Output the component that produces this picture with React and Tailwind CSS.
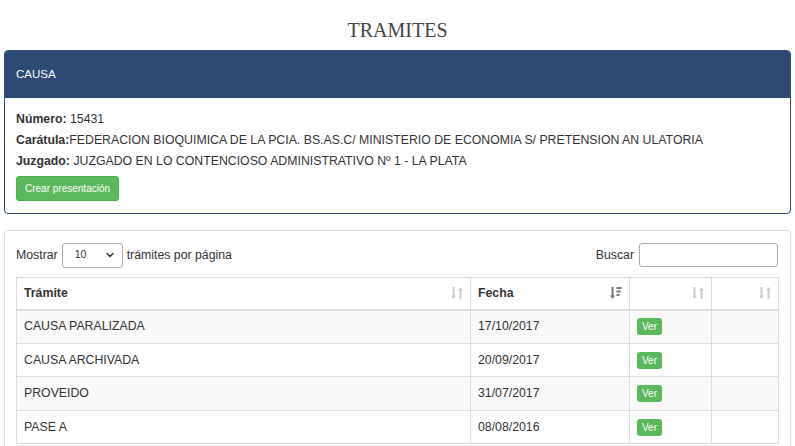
import { ChevronDown } from 'lucide-react'

const rows = [
  { tramite: 'CAUSA PARALIZADA', fecha: '17/10/2017' },
  { tramite: 'CAUSA ARCHIVADA', fecha: '20/09/2017' },
  { tramite: 'PROVEIDO', fecha: '31/07/2017' },
  { tramite: 'PASE A', fecha: '08/08/2016' },
]

// glyphicon-sort look-alike: down arrow + up arrow
function SortIcon({ className }) {
  return (
    <svg width="12" height="14" viewBox="0 0 12 14" className={className} fill="currentColor">
      <rect x="1.5" y="1" width="2" height="9" />
      <path d="M0 9.5h5l-2.5 3.5z" />
      <rect x="8.5" y="4" width="2" height="9" />
      <path d="M7 4.5h5l-2.5-3.5z" />
    </svg>
  )
}

// sorted descending: arrow + stacked bars
function SortDescIcon({ className }) {
  return (
    <svg width="12" height="14" viewBox="0 0 12 14" className={className} fill="currentColor">
      <rect x="1.5" y="1" width="2" height="9" />
      <path d="M0 9.5h5l-2.5 3.5z" />
      <rect x="6.5" y="1" width="5" height="2" />
      <rect x="6.5" y="4.5" width="4" height="2" />
      <rect x="6.5" y="8" width="3" height="2" />
    </svg>
  )
}

export default function App() {
  return (
    <div className="h-[446px] overflow-hidden bg-white px-1 text-[12.3px] text-[#333] font-['Liberation_Sans',Arial,sans-serif]">
      {/* Title */}
      <h1 className="pt-[19px] pb-[8px] text-center font-['Liberation_Serif','Times_New_Roman',serif] text-[20px] leading-[23px] text-[#444]">
        TRAMITES
      </h1>

      {/* Causa panel */}
      <div className="rounded border border-[#2c4a73] mb-4">
        <div className="h-[47px] flex items-center px-[11px] bg-[#2c4a73] text-white text-[11.5px] rounded-t-[3px]">
          CAUSA
        </div>
        <div className="px-[11px] pt-[11px] pb-[12px] leading-[21px]">
          <div><b>Número:</b> 15431</div>
          <div><b>Carátula:</b>FEDERACION BIOQUIMICA DE LA PCIA. BS.AS.C/ MINISTERIO DE ECONOMIA S/ PRETENSION AN ULATORIA</div>
          <div><b>Juzgado:</b> JUZGADO EN LO CONTENCIOSO ADMINISTRATIVO Nº 1 - LA PLATA</div>
          <button className="mt-[4px] h-[25px] px-[8px] rounded-[3px] border border-[#4cae4c] bg-[#5cb85c] text-white text-[10px] leading-none">
            Crear presentación
          </button>
        </div>
      </div>

      {/* Tramites table panel */}
      <div className="rounded border border-[#ddd] px-[11px] pt-[11px] pb-4">
        <div className="flex items-center justify-between h-[26px] mb-[9px]">
          <div className="flex items-center gap-[4px]">
            <span>Mostrar</span>
            <div className="flex items-center justify-between w-[61px] h-[25px] border border-[#aaa] rounded-[3px] pl-[12px] pr-[6px] text-[10.5px]">
              <span>10</span>
              <ChevronDown size={12} strokeWidth={3} />
            </div>
            <span>trámites por página</span>
          </div>
          <div className="flex items-center gap-[5px] pr-[1px]">
            <span>Buscar</span>
            <div className="w-[139px] h-[24px] border border-[#aaa] rounded-[3px]" />
          </div>
        </div>

        <table className="w-full border-collapse border border-[#ddd]">
          <thead>
            <tr className="h-[32px] border-b-2 border-[#ddd]">
              <th className="w-[454px] border-r border-[#ddd] px-[7px] text-left">
                <div className="flex items-center justify-between">
                  <span>Trámite</span>
                  <SortIcon className="text-[#ccc]" />
                </div>
              </th>
              <th className="w-[159px] border-r border-[#ddd] px-[7px] text-left">
                <div className="flex items-center justify-between">
                  <span>Fecha</span>
                  <SortDescIcon className="text-[#777]" />
                </div>
              </th>
              <th className="w-[82px] border-r border-[#ddd] px-[7px]">
                <div className="flex items-center justify-end">
                  <SortIcon className="text-[#ccc]" />
                </div>
              </th>
              <th className="px-[7px]">
                <div className="flex items-center justify-end">
                  <SortIcon className="text-[#ccc]" />
                </div>
              </th>
            </tr>
          </thead>
          <tbody>
            {rows.map((r, i) => (
              <tr key={i} className={`h-[33.5px] border-t border-[#ddd] ${i % 2 === 0 ? 'bg-[#f9f9f9]' : 'bg-white'}`}>
                <td className="border-r border-[#ddd] px-[7px]">{r.tramite}</td>
                <td className="border-r border-[#ddd] px-[7px]">{r.fecha}</td>
                <td className="border-r border-[#ddd] px-[7px]">
                  <span className="inline-flex items-center justify-center h-[17px] px-[5px] rounded-[3px] bg-[#5cb85c] text-white text-[10px]">
                    Ver
                  </span>
                </td>
                <td className="px-[7px]"></td>
              </tr>
            ))}
          </tbody>
        </table>
      </div>
    </div>
  )
}
